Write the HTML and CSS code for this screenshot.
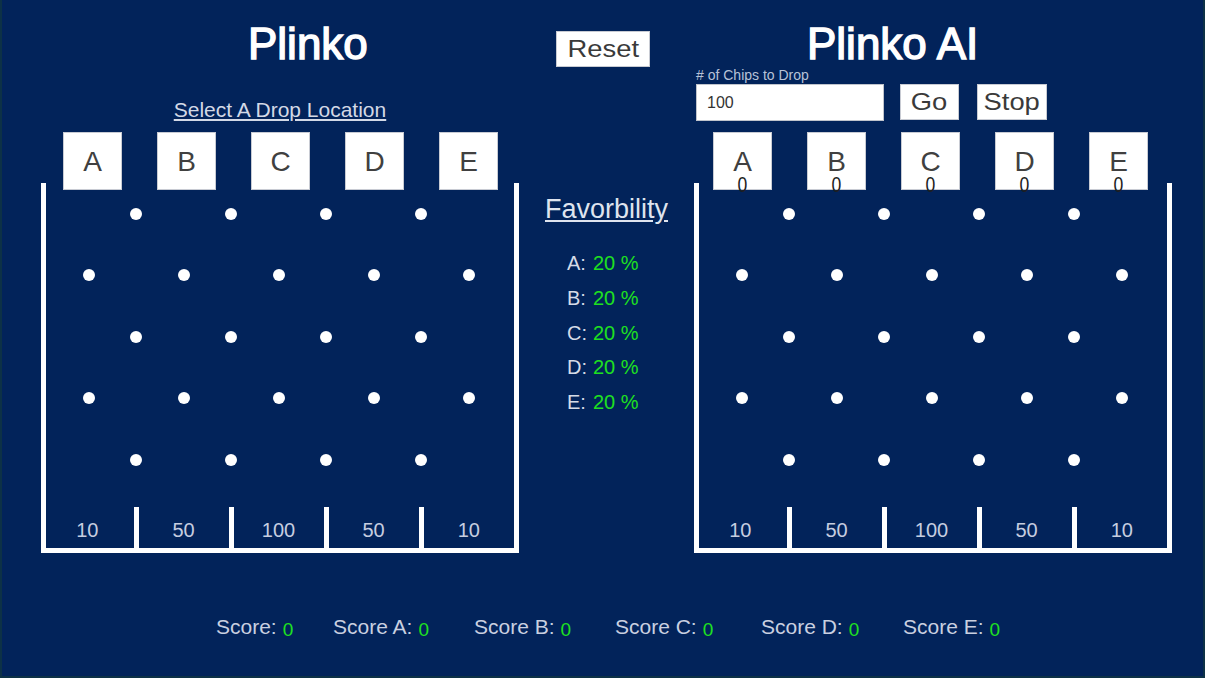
FILE: index.html
```html
<!DOCTYPE html>
<html lang="en">
<head>
<meta charset="utf-8">
<title>Plinko</title>
<link rel="stylesheet" href="styles.css">
</head>
<body>
<div class="screen">
  <div class="top">
    <section class="panel">
      <h1 class="title title-left">Plinko</h1>
      <div class="select">Select A Drop Location</div>
      <div class="drops drops-left">
        <div class="drop">A</div>
        <div class="drop">B</div>
        <div class="drop">C</div>
        <div class="drop">D</div>
        <div class="drop">E</div>
      </div>
      <div class="board">
        <span class="peg r1 a1"></span><span class="peg r1 a2"></span><span class="peg r1 a3"></span><span class="peg r1 a4"></span>
        <span class="peg r2 b1"></span><span class="peg r2 b2"></span><span class="peg r2 b3"></span><span class="peg r2 b4"></span><span class="peg r2 b5"></span>
        <span class="peg r3 a1"></span><span class="peg r3 a2"></span><span class="peg r3 a3"></span><span class="peg r3 a4"></span>
        <span class="peg r4 b1"></span><span class="peg r4 b2"></span><span class="peg r4 b3"></span><span class="peg r4 b4"></span><span class="peg r4 b5"></span>
        <span class="peg r5 a1"></span><span class="peg r5 a2"></span><span class="peg r5 a3"></span><span class="peg r5 a4"></span>
        <div class="slots">
          <div class="slot slot-first">10</div><div class="divider"></div>
          <div class="slot">50</div><div class="divider"></div>
          <div class="slot">100</div><div class="divider"></div>
          <div class="slot">50</div><div class="divider"></div>
          <div class="slot">10</div>
        </div>
      </div>
    </section>

    <section class="middle">
      <div class="btn reset"><span>Reset</span></div>
      <div class="fav-title">Favorbility</div>
      <ul class="fav">
        <li><span class="fav-k">A:</span><span class="green">20 %</span></li>
        <li><span class="fav-k">B:</span><span class="green">20 %</span></li>
        <li><span class="fav-k">C:</span><span class="green">20 %</span></li>
        <li><span class="fav-k">D:</span><span class="green">20 %</span></li>
        <li><span class="fav-k">E:</span><span class="green">20 %</span></li>
      </ul>
    </section>

    <section class="panel">
      <h1 class="title title-right">Plinko AI</h1>
      <div class="chips-label"># of Chips to Drop</div>
      <div class="controls">
        <div class="input">100</div>
        <div class="btn go"><span>Go</span></div>
        <div class="btn stop"><span>Stop</span></div>
      </div>
      <div class="drops drops-right">
        <div class="drop">A<span class="count">0</span></div>
        <div class="drop">B<span class="count">0</span></div>
        <div class="drop">C<span class="count">0</span></div>
        <div class="drop">D<span class="count">0</span></div>
        <div class="drop">E<span class="count">0</span></div>
      </div>
      <div class="board">
        <span class="peg r1 a1"></span><span class="peg r1 a2"></span><span class="peg r1 a3"></span><span class="peg r1 a4"></span>
        <span class="peg r2 b1"></span><span class="peg r2 b2"></span><span class="peg r2 b3"></span><span class="peg r2 b4"></span><span class="peg r2 b5"></span>
        <span class="peg r3 a1"></span><span class="peg r3 a2"></span><span class="peg r3 a3"></span><span class="peg r3 a4"></span>
        <span class="peg r4 b1"></span><span class="peg r4 b2"></span><span class="peg r4 b3"></span><span class="peg r4 b4"></span><span class="peg r4 b5"></span>
        <span class="peg r5 a1"></span><span class="peg r5 a2"></span><span class="peg r5 a3"></span><span class="peg r5 a4"></span>
        <div class="slots">
          <div class="slot slot-first">10</div><div class="divider"></div>
          <div class="slot">50</div><div class="divider"></div>
          <div class="slot">100</div><div class="divider"></div>
          <div class="slot">50</div><div class="divider"></div>
          <div class="slot">10</div>
        </div>
      </div>
    </section>
  </div>

  <div class="scores">
    <div class="score">Score:<span class="v">0</span></div>
    <div class="score">Score A:<span class="v">0</span></div>
    <div class="score">Score B:<span class="v">0</span></div>
    <div class="score">Score C:<span class="v">0</span></div>
    <div class="score">Score D:<span class="v">0</span></div>
    <div class="score">Score E:<span class="v">0</span></div>
  </div>
</div>
</body>
</html>
```
FILE: styles.css
```css
html, body {
  margin: 0;
  padding: 0;
  background: #02235a;
  font-family: "Liberation Sans", Arial, sans-serif;
}

.screen {
  width: 1205px;
  height: 678px;
  box-sizing: border-box;
  border: 2px solid #0d3146;
  border-top: 0;
  background: #02235a;
  overflow: hidden;
}

.top {
  display: flex;
  align-items: flex-start;
  padding-left: 39px;
}

.panel {
  width: 478px;
  display: flex;
  flex-direction: column;
}

.title {
  margin: 21px 0 0;
  font-size: 44px;
  line-height: 46px;
  font-weight: normal;
  color: #fff;
  -webkit-text-stroke: 1.4px #fff;
  white-space: nowrap;
}
.title-left { padding-left: 207px; }
.title-right { padding-left: 113px; }

.select {
  margin-top: 31px;
  font-size: 21px;
  line-height: 24px;
  text-align: center;
  color: #d3d9e6;
  text-decoration: underline;
}

.drops {
  display: flex;
  gap: 35px;
  margin-top: 10px;
  position: relative;
  z-index: 1;
}
.drops-left { padding-left: 22px; }
.drops-right { padding-left: 19px; margin-top: 11px; }

.drop {
  width: 59px;
  height: 58px;
  box-sizing: border-box;
  background: #fff;
  border: 1px solid #c8cbd3;
  display: flex;
  align-items: center;
  justify-content: center;
  padding-top: 2px;
  font-size: 28px;
  line-height: 28px;
  color: #404040;
  position: relative;
}

.count {
  position: absolute;
  left: 0;
  right: 0;
  bottom: -5px;
  text-align: center;
  font-size: 22px;
  line-height: 18px;
  color: #1e1e1e;
  transform: scaleX(0.8);
}

.board {
  width: 478px;
  height: 370px;
  box-sizing: border-box;
  border: 5px solid #fff;
  border-top: 0;
  margin-top: -7px;
  position: relative;
  display: flex;
  flex-direction: column;
  justify-content: flex-end;
}

.peg {
  position: absolute;
  width: 12px;
  height: 12px;
  border-radius: 50%;
  background: #fff;
}
.r1 { top: 25px; }
.r2 { top: 86px; }
.r3 { top: 148px; }
.r4 { top: 209px; }
.r5 { top: 271px; }
.a1 { left: 84px; }
.a2 { left: 179px; }
.a3 { left: 274px; }
.a4 { left: 369px; }
.b1 { left: 37px; }
.b2 { left: 132px; }
.b3 { left: 227px; }
.b4 { left: 322px; }
.b5 { left: 417px; }

.slots {
  display: grid;
  grid-template-columns: 87.5px 5px 90px 5px 90px 5px 90px 5px 1fr;
  height: 41px;
}
.slot {
  height: 41px;
  box-sizing: border-box;
  padding-top: 6px;
  font-size: 20px;
  line-height: 35px;
  text-align: center;
  color: #c6cee0;
}
.slot-first { padding-right: 5px; }
.divider { background: #fff; }

.middle {
  width: 175px;
  padding-top: 31px;
  display: flex;
  flex-direction: column;
}

.btn {
  box-sizing: border-box;
  background: #fff;
  border: 1px solid #c8cbd3;
  display: flex;
  align-items: center;
  justify-content: center;
  font-size: 24px;
  color: #3a3a3a;
}
.btn span {
  display: inline-block;
  transform: scaleX(1.14);
}
.reset {
  margin-left: 37px;
  width: 94px;
  height: 36px;
}

.fav-title {
  margin-top: 127px;
  font-size: 27px;
  line-height: 30px;
  text-align: center;
  color: #dfe4ee;
  text-decoration: underline;
}

.fav {
  list-style: none;
  margin: 22px 0 0;
  padding: 0 0 0 48px;
}
.fav li {
  font-size: 20px;
  line-height: 34.75px;
  white-space: nowrap;
}
.fav-k {
  display: inline-block;
  width: 26px;
  color: #d5dbe7;
}
.green { color: #1fe01f; }

.chips-label {
  padding-left: 2px;
  font-size: 14px;
  line-height: 16px;
  color: #b7c2d8;
}

.controls {
  display: flex;
  align-items: flex-start;
  margin-top: 1px;
  padding-left: 2px;
}
.input {
  width: 188px;
  height: 37px;
  box-sizing: border-box;
  background: #fff;
  border: 1px solid #c0c4cc;
  padding-left: 10px;
  font-size: 16px;
  line-height: 35px;
  color: #333;
}
.go {
  margin-left: 16px;
  width: 59px;
  height: 36px;
}
.stop {
  margin-left: 18px;
  width: 70px;
  height: 36px;
}

.scores {
  margin-top: 62px;
  padding-left: 214px;
  display: grid;
  grid-template-columns: 117px 141px 141px 146px 142px auto;
  font-size: 21px;
  line-height: 24px;
  color: #c9d0e0;
}
.score { white-space: nowrap; }
.score .v {
  color: #1fe01f;
  font-size: 19px;
  margin-left: 6px;
  vertical-align: -2px;
}
```
